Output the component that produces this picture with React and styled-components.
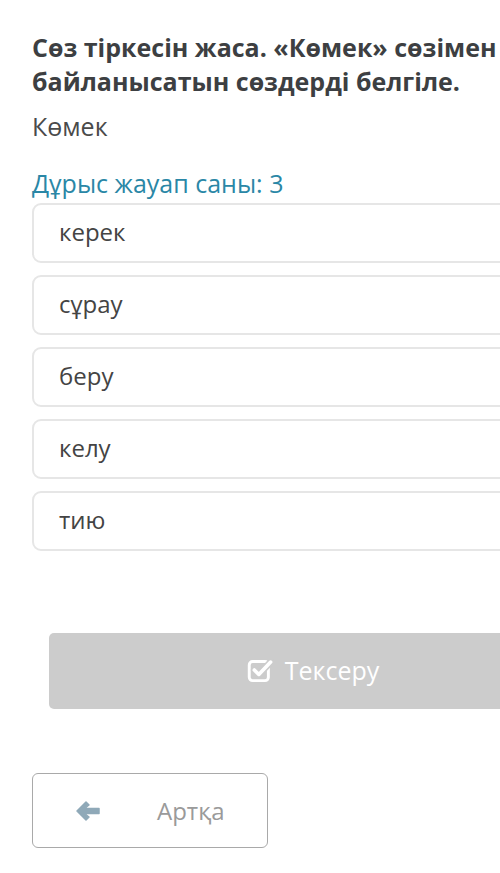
import React from "react";
import styled, { createGlobalStyle } from "styled-components";

const Global = createGlobalStyle`
  html, body { margin: 0; padding: 0; background: #ffffff; overflow: hidden; }
  body { font-family: "Open Sans", "Noto Sans", sans-serif; }
  * { box-sizing: border-box; }
`;

const Page = styled.div`
  width: 500px;
  height: 873px;
  overflow: hidden;
  padding: 30px 0 0 32px;
`;

const Title = styled.h1`
  margin: 0;
  font-size: 25px;
  line-height: 34px;
  font-weight: 700;
  color: #3d3f42;
  white-space: nowrap;
`;

const Word = styled.div`
  margin-top: 12px;
  font-size: 25px;
  line-height: 32px;
  color: #4a4a4a;
`;

const Count = styled.div`
  margin-top: 25px;
  font-size: 25px;
  line-height: 32px;
  color: #2a87a6;
`;

const Options = styled.div`
  display: flex;
  flex-direction: column;
  gap: 12px;
  width: 520px;
  margin-top: 4px;
`;

const Option = styled.div`
  height: 60px;
  border: 2px solid #e6e6e6;
  border-radius: 9px;
  padding: 0 0 4px 25px;
  display: flex;
  align-items: center;
  font-size: 24px;
  color: #444444;
`;

const CheckButton = styled.div`
  margin: 82px 0 0 17px;
  width: 528px;
  height: 76px;
  background: #cccccc;
  border-radius: 5px;
  display: flex;
  align-items: center;
  justify-content: center;
  gap: 11px;
  color: #ffffff;
  font-size: 25px;
  padding-bottom: 2px;
`;

const BackButton = styled.div`
  margin-top: 64px;
  width: 236px;
  height: 75px;
  border: 1.5px solid #a9a9a9;
  border-radius: 6px;
  display: flex;
  align-items: center;
  padding-left: 42px;
  gap: 56px;
  color: #9a9a9a;
  font-size: 24px;
`;

const CheckIcon = () => (
  <svg width="27" height="27" viewBox="0 0 24 24" fill="none">
    <rect x="2" y="4" width="17" height="17" rx="3" stroke="#ffffff" strokeWidth="2.6" />
    <path d="M6.5 11.5 L10.5 15.5 L21 4.5" stroke="#cccccc" strokeWidth="6" strokeLinecap="round" strokeLinejoin="round" />
    <path d="M6.5 11.5 L10.5 15.5 L21 4.5" stroke="#ffffff" strokeWidth="3.2" strokeLinecap="round" strokeLinejoin="round" />
  </svg>
);

const ArrowIcon = () => (
  <svg width="26" height="22" viewBox="0 0 26 22">
    <path d="M11 2 L2 11 L11 20 L14 17 L9.5 13.5 L24 13.5 L24 8.5 L9.5 8.5 L14 5 Z" fill="#8fa9b8" strokeLinejoin="round" stroke="#8fa9b8" strokeWidth="1.5" />
  </svg>
);

const items = ["керек", "сұрау", "беру", "келу", "тию"];

export default function App() {
  return (
    <>
      <Global />
      <Page>
        <Title>
          Сөз тіркесін жаса. «Көмек» сөзімен
          <br />
          байланысатын сөздерді белгіле.
        </Title>
        <Word>Көмек</Word>
        <Count>Дұрыс жауап саны: 3</Count>
        <Options>
          {items.map((t) => (
            <Option key={t}>{t}</Option>
          ))}
        </Options>
        <CheckButton>
          <CheckIcon />
          <span>Тексеру</span>
        </CheckButton>
        <BackButton>
          <ArrowIcon />
          <span>Артқа</span>
        </BackButton>
      </Page>
    </>
  );
}
